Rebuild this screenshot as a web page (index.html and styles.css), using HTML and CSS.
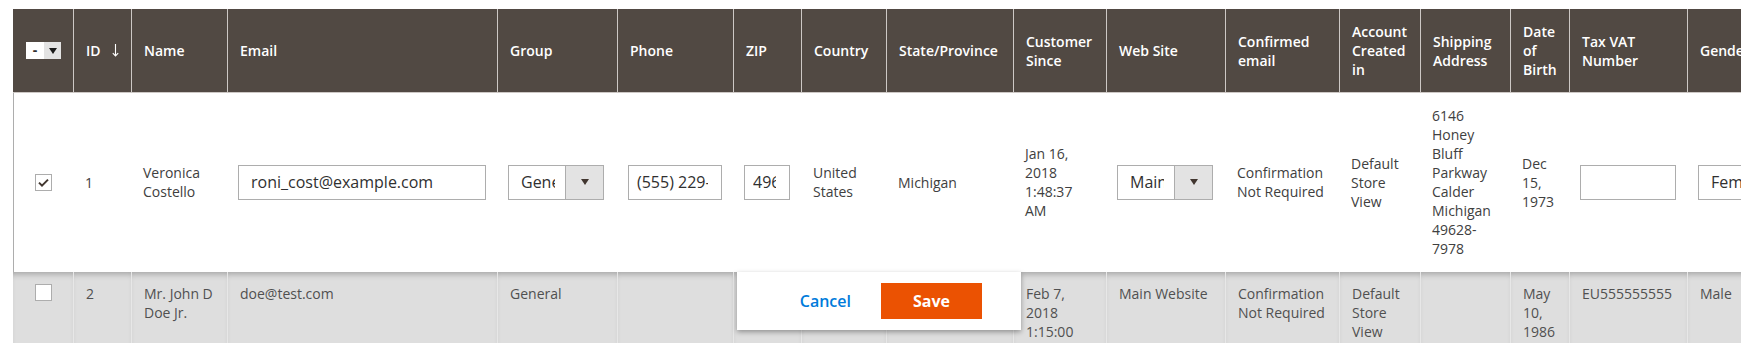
FILE: index.html
```html
<!DOCTYPE html>
<html lang="en">
<head>
	<meta charset="UTF-8">
	<meta name="viewport" content="width=device-width, initial-scale=1.0">
	<title>Customers Grid - Inline Edit</title>
	<link rel="stylesheet" href="styles.css">
</head>

<body>

	<div class="grid-wrap">
		<table class="data-grid">
			<colgroup>
				<col class="col-check">
				<col class="col-id">
				<col class="col-name">
				<col class="col-email">
				<col class="col-group">
				<col class="col-phone">
				<col class="col-zip">
				<col class="col-country">
				<col class="col-state">
				<col class="col-since">
				<col class="col-site">
				<col class="col-confirm">
				<col class="col-created">
				<col class="col-address">
				<col class="col-dob">
				<col class="col-tax">
				<col class="col-gender">
			</colgroup>

			<thead>
				<tr>
					<th class="th-check">
						<span class="multicheck">
							<span class="multicheck-box">-</span>
							<span class="multicheck-toggle"></span>
						</span>
					</th>
					<th>ID<svg class="sort-arrow" width="7" height="13" viewBox="0 0 7 13"><path d="M3.5 0v12M0.8 9.2l2.7 2.8 2.7-2.8" fill="none" stroke="#fff" stroke-width="1.1"/></svg></th>
					<th>Name</th>
					<th>Email</th>
					<th>Group</th>
					<th>Phone</th>
					<th>ZIP</th>
					<th>Country</th>
					<th>State/Province</th>
					<th>Customer Since</th>
					<th>Web Site</th>
					<th>Confirmed email</th>
					<th>Account Created in</th>
					<th>Shipping Address</th>
					<th>Date of Birth</th>
					<th>Tax VAT Number</th>
					<th>Gender</th>
				</tr>
			</thead>

			<tbody>
				<!-- row in inline edit mode -->
				<tr class="row-edit">
					<td class="cell-check">
						<span class="checkbox">
							<svg width="11" height="9" viewBox="0 0 11 9"><path d="M1 4.6l3 3 6-6" fill="none" stroke="#41362f" stroke-width="2"/></svg>
						</span>
					</td>
					<td>1</td>
					<td>Veronica Costello</td>
					<td class="cell-field"><input class="field" type="text" value="roni_cost@example.com"></td>
					<td class="cell-field">
						<div class="select"><span class="select-value">General</span><span class="select-arrow"></span></div>
					</td>
					<td class="cell-field"><input class="field field-narrow" type="text" value="(555) 229-3326"></td>
					<td class="cell-field cell-actions">
						<input class="field field-narrow" type="text" value="49628-7978">
						<div class="row-actions">
							<button class="btn-link">Cancel</button>
							<button class="btn-primary">Save</button>
						</div>
					</td>
					<td>United States</td>
					<td>Michigan</td>
					<td>Jan 16, 2018 1:48:37 AM</td>
					<td class="cell-field">
						<div class="select"><span class="select-value">Main Website</span><span class="select-arrow"></span></div>
					</td>
					<td>Confirmation Not Required</td>
					<td>Default Store View</td>
					<td>6146 Honey Bluff Parkway Calder Michigan 49628-7978</td>
					<td>Dec 15, 1973</td>
					<td class="cell-field"><input class="field" type="text" value=""></td>
					<td class="cell-field">
						<div class="select"><span class="select-value">Female</span><span class="select-arrow"></span></div>
					</td>
				</tr>

				<tr class="row-muted">
					<td class="cell-check"><span class="checkbox"></span></td>
					<td>2</td>
					<td>Mr. John D Doe Jr.</td>
					<td>doe@test.com</td>
					<td>General</td>
					<td></td>
					<td></td>
					<td></td>
					<td></td>
					<td>Feb 7, 2018 1:15:00 AM</td>
					<td>Main Website</td>
					<td>Confirmation Not Required</td>
					<td>Default Store View</td>
					<td></td>
					<td>May 10, 1986</td>
					<td>EU555555555</td>
					<td>Male</td>
				</tr>
			</tbody>
		</table>
	</div>

</body>

</html>
```

FILE: styles.css
```css
*{
	font-family: 'Open Sans', 'Liberation Sans', sans-serif;
	margin: 0;
	padding: 0;
	box-sizing: border-box;
}

body{
	background-color: white;
	color: #404040;
	overflow: hidden;
}

.grid-wrap {
	margin: 9px 0 0 13px;
	width: 1728px;
	overflow: hidden;
}

.data-grid {
	width: 1784px;
	table-layout: fixed;
	border-collapse: separate;
	border-spacing: 0;
	font-size: 14px;
	line-height: 19px;
}

/* column widths */
.col-check { width: 60px; }
.col-id { width: 58px; }
.col-name { width: 96px; }
.col-email { width: 270px; }
.col-group { width: 120px; }
.col-phone { width: 116px; }
.col-zip { width: 68px; }
.col-country { width: 85px; }
.col-state { width: 127px; }
.col-since { width: 93px; }
.col-site { width: 119px; }
.col-confirm { width: 114px; }
.col-created { width: 81px; }
.col-address { width: 90px; }
.col-dob { width: 59px; }
.col-tax { width: 118px; }
.col-gender { width: 110px; }

/* header */
.data-grid th {
	height: 84px;
	padding: 0 8px 0 12px;
	background-color: #514943;
	color: white;
	font-weight: 600;
	text-align: left;
	vertical-align: middle;
	border-bottom: 1px solid #cdc8c5;
}
.data-grid th + th {
	border-left: 1px solid #cdc8c5;
}
.data-grid .th-check {
	padding-left: 13px;
}

.multicheck {
	display: flex;
	width: 35px;
	height: 17px;
}
.multicheck-box {
	width: 18px;
	background-color: white;
	color: #303030;
	font-size: 14px;
	font-weight: 700;
	line-height: 16px;
	text-align: center;
}
.multicheck-toggle {
	width: 17px;
	background-color: #e3e3e3;
	display: flex;
	justify-content: center;
	align-items: center;
}
.multicheck-toggle::after {
	content: '';
	border-top: 6px solid #1a1a1a;
	border-left: 4.5px solid transparent;
	border-right: 4.5px solid transparent;
}

.sort-arrow {
	margin-left: 11px;
	vertical-align: -1px;
}

/* body cells */
.data-grid td {
	padding: 0 12px;
	text-align: left;
}

.row-edit td {
	background-color: white;
	vertical-align: middle;
	padding-top: 13px;
	padding-bottom: 14px;
}
.row-edit .cell-check {
	border-left: 1px solid #adadad;
	padding-left: 21px;
}

.row-muted td {
	background-color: #dedede;
	color: #505050;
	vertical-align: top;
	padding-top: 12px;
	padding-bottom: 12px;
	border-left: 1px solid #e7e7e7;
	box-shadow: inset 0 6px 6px -4px rgba(0, 0, 0, 0.28);
}
.row-muted .cell-check {
	border-left: 0;
	padding-left: 22px;
}

.checkbox {
	display: flex;
	justify-content: center;
	align-items: center;
	width: 17px;
	height: 17px;
	border: 1px solid #adadad;
	background-color: white;
}

/* inline edit fields */
.row-edit .cell-field {
	padding-left: 11px;
	padding-right: 11px;
}

.field {
	display: block;
	width: 100%;
	height: 35px;
	padding: 0 12px;
	border: 1px solid #adadad;
	background-color: white;
	color: #303030;
	font-size: 16px;
	outline: none;
}
.field-narrow {
	padding: 0 13px 0 8px;
}

.select {
	display: flex;
	width: 96px;
	height: 35px;
	border: 1px solid #adadad;
	background-color: white;
	overflow: hidden;
}
.select-value {
	flex: 1;
	overflow: hidden;
	white-space: nowrap;
	padding-left: 12px;
	margin-right: 10px;
	font-size: 16px;
	line-height: 33px;
	color: #303030;
}
.select-arrow {
	flex: 0 0 38px;
	background-color: #e3e3e3;
	border-left: 1px solid #adadad;
	display: flex;
	justify-content: center;
	align-items: center;
}
.select-arrow::after {
	content: '';
	border-top: 6px solid #41362f;
	border-left: 4.5px solid transparent;
	border-right: 4.5px solid transparent;
}

/* save / cancel panel under the edited row */
.cell-actions {
	position: relative;
}
.row-actions {
	position: absolute;
	top: 100%;
	left: 4px;
	z-index: 2;
	width: 284px;
	height: 58px;
	padding-right: 39px;
	display: flex;
	justify-content: flex-end;
	align-items: center;
	gap: 30px;
	background-color: white;
	box-shadow: 0 2px 5px rgba(0, 0, 0, 0.35);
}
.btn-link {
	border: none;
	background: none;
	color: #007bdb;
	font-size: 16px;
	font-weight: 600;
}
.btn-primary {
	width: 101px;
	height: 36px;
	border: 1px solid #eb5202;
	background-color: #eb5202;
	color: white;
	font-size: 16px;
	font-weight: 700;
}
```
